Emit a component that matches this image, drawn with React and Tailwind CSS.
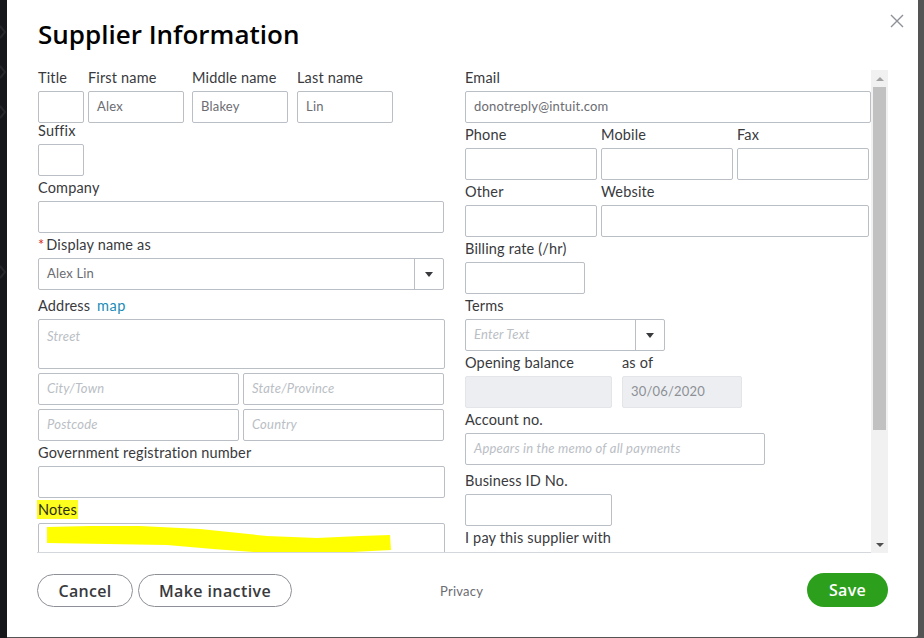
const font = "font-['Lato','Liberation_Sans',sans-serif]";
const heading = "font-['Open_Sans','Liberation_Sans',sans-serif] font-semibold";

function Field({ label, className = "", value, placeholder, labelClass = "" }) {
  return (
    <div className={className}>
      {label && <Label className={labelClass}>{label}</Label>}
      <Box value={value} placeholder={placeholder} />
    </div>
  );
}

function Label({ children, className = "" }) {
  return <div className={`h-[21px] text-[14.5px] leading-[16px] tracking-[0.16px] text-[#393a3d] whitespace-nowrap ${className}`}>{children}</div>;
}

function Box({ value, placeholder, className = "h-8", disabled }) {
  return (
    <div
      className={`border rounded-[2px] px-2 flex items-center text-[13px] tracking-[0.2px] whitespace-nowrap ${
        disabled ? "bg-[#eceef1] border-[#e3e5e8] text-[#8d9096]" : "bg-white border-[#babec5] text-[#6b6c72]"
      } ${className}`}
    >
      {value}
      {placeholder && <span className="italic text-[#babec5]">{placeholder}</span>}
    </div>
  );
}

function Select({ value, placeholder, className = "" }) {
  return (
    <div className={`h-8 border border-[#babec5] rounded-[2px] flex items-center text-[13px] tracking-[0.2px] text-[#6b6c72] ${className}`}>
      <div className="flex-1 px-2">
        {value}
        {placeholder && <span className="italic text-[#babec5]">{placeholder}</span>}
      </div>
      <div className="w-[29px] h-full border-l border-[#babec5] flex items-center justify-center">
        <span className="w-0 h-0 border-x-[4px] border-x-transparent border-t-[5px] border-t-[#393a3d]" />
      </div>
    </div>
  );
}

function Scrollbar() {
  return (
    <div className="w-[17px] shrink-0 bg-[#f1f1f1] flex flex-col items-center">
      <div className="h-[17px] flex items-center justify-center">
        <span className="w-0 h-0 border-x-[4px] border-x-transparent border-b-[4px] border-b-[#a3a3a3]" />
      </div>
      <div className="w-[13px] h-[343px] bg-[#c1c1c1]" />
      <div className="flex-1" />
      <div className="h-[17px] flex items-center justify-center">
        <span className="w-0 h-0 border-x-[4px] border-x-transparent border-t-[4px] border-t-[#505050]" />
      </div>
    </div>
  );
}

function LeftColumn() {
  return (
    <div className="w-[407px] shrink-0">
      <div className="flex">
        <Field label="Title" className="w-[46px] mr-1" />
        <Field label="First name" value="Alex" className="w-[96px] mr-2" />
        <Field label="Middle name" value="Blakey" className="w-[96px] mr-[9px]" />
        <Field label="Last name" value="Lin" className="w-[96px]" />
      </div>
      <Field label="Suffix" className="w-[46px]" />
      <Label className="mt-1">Company</Label>
      <Box className="h-8 w-[406px]" />
      <Label className="mt-1">
        <span className="text-[#d52b1e] mr-[2px]">*</span>Display name as
      </Label>
      <Select value="Alex Lin" className="w-[406px]" />
      <Label className="mt-2">
        Address <span className="text-[#1a8bb8] ml-[3px] tracking-[0.5px]">map</span>
      </Label>
      <div className="border border-[#babec5] rounded-[2px] h-[50px] px-2 pt-2 text-[13px] leading-4 italic tracking-[0.2px] text-[#babec5]">Street</div>
      <div className="grid grid-cols-[201px_201px] gap-1 mt-1">
        <Box placeholder="City/Town" />
        <Box placeholder="State/Province" />
        <Box placeholder="Postcode" />
        <Box placeholder="Country" />
      </div>
      <Label className="mt-1">Government registration number</Label>
      <Box />
      <Label className="mt-1">
        <span className="relative">
          <span className="absolute -left-[2px] -right-[1px] -top-[1px] -bottom-[1px] bg-[#fdfd1e]" />
          <span className="relative text-[#2e2e14]">Notes</span>
        </span>
      </Label>
      <div className="relative h-[60px] border border-[#babec5] rounded-[2px]">
        <svg className="absolute -left-[39px] top-0" width="440" height="30" viewBox="0 0 440 30">
          <path d="M47 3 L90 2 L140 2 L200 5 L267 12 L317 14 L360 12 L390 11 L391 26 L333 29 L267 29 L213 25 L167 21 L47 19 Z" fill="#ffff00" />
        </svg>
      </div>
    </div>
  );
}

function RightColumn() {
  return (
    <div className="w-[406px] shrink-0 ml-5">
      <Field label="Email" value="donotreply@intuit.com" />
      <div className="grid grid-cols-[132px_132px_132px] gap-x-1 mt-1">
        <Field label="Phone" />
        <Field label="Mobile" />
        <Field label="Fax" />
      </div>
      <div className="flex gap-1 mt-1">
        <Field label="Other" className="w-[132px]" />
        <Field label="Website" className="w-[268px]" />
      </div>
      <Field label="Billing rate (/hr)" className="w-[120px] mt-1" />
      <Label className="mt-1">Terms</Label>
      <Select placeholder="Enter Text" className="w-[200px]" />
      <div className="flex mt-1">
        <div className="w-[147px] mr-[10px]">
          <Label>Opening balance</Label>
          <Box disabled />
        </div>
        <div className="w-[120px]">
          <Label>as of</Label>
          <Box disabled value="30/06/2020" />
        </div>
      </div>
      <Field label="Account no." placeholder="Appears in the memo of all payments" className="w-[300px] mt-1" />
      <Field label="Business ID No." className="w-[147px] mt-2" />
      <Label className="mt-1">I pay this supplier with</Label>
    </div>
  );
}

function Chevron({ className }) {
  return (
    <svg className={`absolute left-0 ${className}`} width="7" height="14" viewBox="0 0 7 14" fill="none" stroke="#26272b" strokeWidth="2">
      <path d="M0 1 L5 7 L0 13" />
    </svg>
  );
}

export default function App() {
  return (
    <div className={`relative w-[924px] h-[638px] overflow-hidden flex bg-[#545454] ${font}`}>
      <div className="relative w-[7px] bg-[#15161a] shrink-0">
        <Chevron className="top-[25px]" />
        <Chevron className="top-[65px]" />
        <Chevron className="top-[105px]" />
        <Chevron className="top-[265px]" />
      </div>
      <div className="relative w-[911px] h-[637px] bg-white rounded-br-[3px] flex flex-col shrink-0">
        <button className="absolute right-[14px] top-[14px] text-[#8d9096]">
          <svg width="14" height="14" viewBox="0 0 14 14" fill="none" stroke="currentColor" strokeWidth="1.4">
            <path d="M1 1 L13 13 M13 1 L1 13" />
          </svg>
        </button>
        <h1 className={`ml-[31px] mt-[16px] h-[54px] text-[26px] leading-9 text-black ${heading}`}>Supplier Information</h1>
        <div className="ml-[30px] w-[851px] h-[483px] flex">
          <div className="w-[834px] pl-px border-b border-[#d4d7dc] overflow-hidden flex">
            <LeftColumn />
            <RightColumn />
          </div>
          <Scrollbar />
        </div>
        <div className="ml-[30px] w-[851px] mt-[20px] flex items-center">
          <button className={`w-[96px] h-[33px] pt-px rounded-full border border-[#8d9096] text-[16px] tracking-[0.3px] text-[#393a3d] ${heading}`}>Cancel</button>
          <button className={`w-[154px] h-[33px] pt-px rounded-full border border-[#8d9096] text-[16px] tracking-[0.4px] text-[#393a3d] ml-[5px] ${heading}`}>Make inactive</button>
          <a className="ml-[148px] text-[13px] tracking-[0.25px] text-[#6b6c72] mt-[3px]">Privacy</a>
          <button className={`ml-auto w-[81px] h-[34px] rounded-full bg-[#2ca01c] text-[16px] tracking-[0.3px] text-white ${heading}`}>Save</button>
        </div>
      </div>
    </div>
  );
}
